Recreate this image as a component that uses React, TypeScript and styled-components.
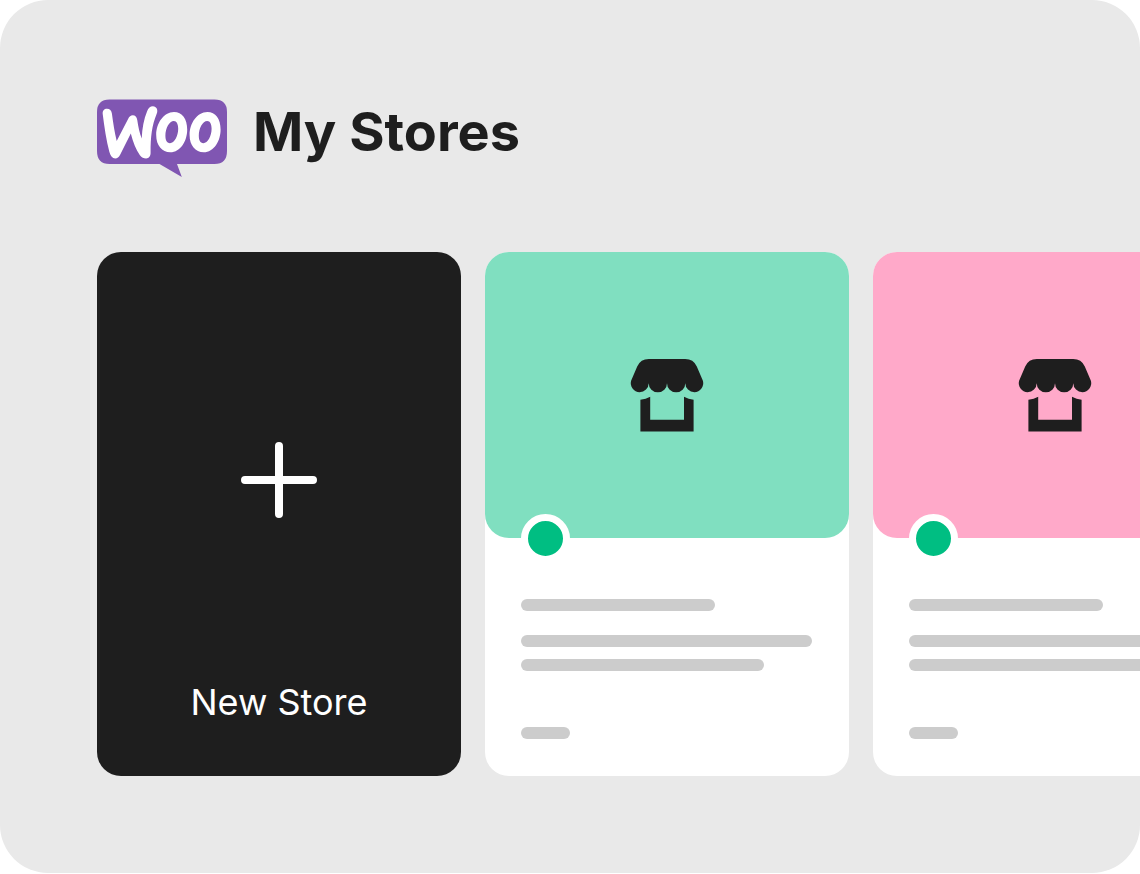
import React from "react";
import styled, { createGlobalStyle } from "styled-components";

const GlobalStyle = createGlobalStyle`
  *, *::before, *::after { box-sizing: border-box; }
  body {
    margin: 0;
    background: #ffffff;
    color: #1e1e1e;
    font-family: Inter, "Liberation Sans", sans-serif;
  }
`;

const Panel = styled.main`
  padding: 99px 0 97px 97px;
  overflow: hidden;
  border-radius: 48px;
  background: #e9e9e9;
`;

const Header = styled.header`
  display: flex;
  align-items: flex-start;
  gap: 26px;
  margin-bottom: 75px;
`;

const Logo = styled.svg`
  display: block;
  flex: none;
  width: 130px;
  height: 78px;
`;

const Title = styled.h1`
  margin: 0;
  font-size: 54px;
  font-weight: 700;
  line-height: 66px;
  white-space: nowrap;
`;

const StoreList = styled.div`
  display: flex;
  gap: 24px;
`;

const NewStoreButton = styled.button`
  display: flex;
  flex: none;
  flex-direction: column;
  align-items: center;
  justify-content: space-between;
  width: 364px;
  min-height: 524px;
  padding: 190px 24px 50px;
  border: 0;
  border-radius: 24px;
  background: #1e1e1e;
  color: #ffffff;
  font-family: inherit;
  font-size: 36px;
  line-height: 48px;
  cursor: pointer;
`;

const PlusIcon = styled.svg`
  display: block;
  width: 76px;
  height: 76px;
`;

const Card = styled.article`
  display: flex;
  flex: none;
  flex-direction: column;
  width: 364px;
  border-radius: 24px;
  background: #ffffff;
`;

const Cover = styled.div<{ $color: string }>`
  position: relative;
  display: flex;
  align-items: center;
  justify-content: center;
  height: 286px;
  border-radius: 24px;
  background: ${({ $color }) => $color};
`;

const StoreIcon = styled.svg`
  display: block;
  width: 74px;
  height: 74px;
`;

const StatusDot = styled.span`
  position: absolute;
  bottom: -25px;
  left: 36px;
  width: 49px;
  height: 49px;
  border: 7px solid #ffffff;
  border-radius: 50%;
  background: #00be82;
`;

const CardBody = styled.div`
  display: flex;
  flex: 1;
  flex-direction: column;
  padding: 61px 36px 36px;
`;

const Line = styled.div<{ $width: number; $gap: number }>`
  width: ${({ $width }) => $width}px;
  height: 12px;
  margin-bottom: ${({ $gap }) => $gap}px;
  border-radius: 6px;
  background: #cccccc;
`;

function WooLogo() {
  return (
    <Logo viewBox="0 0 130 78" role="img" aria-label="Woo">
      <path
        fill="#8056b2"
        d="M12.5 0.5H117.5Q130 0.5 130 13V52Q130 65 117.5 65H80L84.8 78L62.5 65H12.5Q0 65 0 52V13Q0 0.5 12.5 0.5Z"
      />
      <path
        fill="#ffffff"
        d="M10 9.8C7.2 9.8 5.4 11.8 5.7 14.9C7.3 28 9.4 41.5 12.4 53C13.6 57 15.4 59.4 18.2 59.4C20.4 59.4 21.8 58.2 23 56L33.8 34.6C36.2 43.5 39 51 42.9 56.2C44.6 58.4 46.7 59.4 49.1 59.4C52 59.4 53.6 57.2 53.6 53.8C53.5 38 54.9 26.5 59.7 14.8C61.4 10.8 59.5 7.3 55.9 7.2C53.2 7.2 51.4 9 50.2 12C46.8 20.2 45.2 29.5 44.7 39.4C42.6 33.8 41.2 27.8 40.3 21.2C39.8 17.9 38.2 16.2 35.8 16.2C33.7 16.2 32.3 17.5 31.1 19.9L19.7 42C17.7 33.5 16.1 24 14.9 14.5C14.5 11.4 12.8 9.8 10 9.8Z"
      />
      <g fill="#ffffff" fillRule="evenodd">
        <path id="woo-o" d="M77 13C66.5 13 59.2 24.5 59.2 36C59.2 46.5 65 53.3 73.3 53.3C83.5 53.3 90.2 42 90.2 30.5C90.2 20 85.2 13 77 13ZM76.8 22C79.8 22 81.2 25.5 81.2 29.8C81.2 37 77.3 44.2 73 44.2C69.8 44.2 68.4 41 68.4 36.8C68.4 29 72.3 22 76.8 22Z" />
        <use href="#woo-o" x="33.4" />
      </g>
    </Logo>
  );
}

function Storefront() {
  return (
    <StoreIcon viewBox="0 0 74 74" fill="#1e1e1e" aria-hidden="true">
      <path d="M18.8 1H55.2Q63.4 1 66.8 8.4L72.9 22.8A9 9 0 0 1 64.4 34.2A9.1 9.1 0 0 1 55.3 25.2A9.15 9.15 0 0 1 37 25.2A9.15 9.15 0 0 1 18.7 25.2A9.1 9.1 0 0 1 9.6 34.2A9 9 0 0 1 1.1 22.8L7.2 8.4Q10.6 1 18.8 1Z" />
      <path d="M10.4 41.8Q16 41.2 20.2 38.8V61.8H54V38.8Q58.5 41.2 63.6 41.8V73.6H10.4Z" />
    </StoreIcon>
  );
}

function StoreCard({ color }: { color: string }) {
  return (
    <Card>
      <Cover $color={color}>
        <Storefront />
        <StatusDot />
      </Cover>
      <CardBody>
        <Line $width={194} $gap={24} />
        <Line $width={291} $gap={12} />
        <Line $width={243} $gap={56} />
        <Line $width={49} $gap={0} />
      </CardBody>
    </Card>
  );
}

export default function App() {
  return (
    <>
      <GlobalStyle />
      <Panel>
        <Header>
          <WooLogo />
          <Title>My Stores</Title>
        </Header>
        <StoreList>
          <NewStoreButton type="button">
            <PlusIcon viewBox="0 0 76 76" aria-hidden="true">
              <path d="M38 4V72M4 38H72" fill="none" stroke="#ffffff" strokeWidth="8" strokeLinecap="round" />
            </PlusIcon>
            New Store
          </NewStoreButton>
          <StoreCard color="#80dfc0" />
          <StoreCard color="#ffa9c9" />
        </StoreList>
      </Panel>
    </>
  );
}
